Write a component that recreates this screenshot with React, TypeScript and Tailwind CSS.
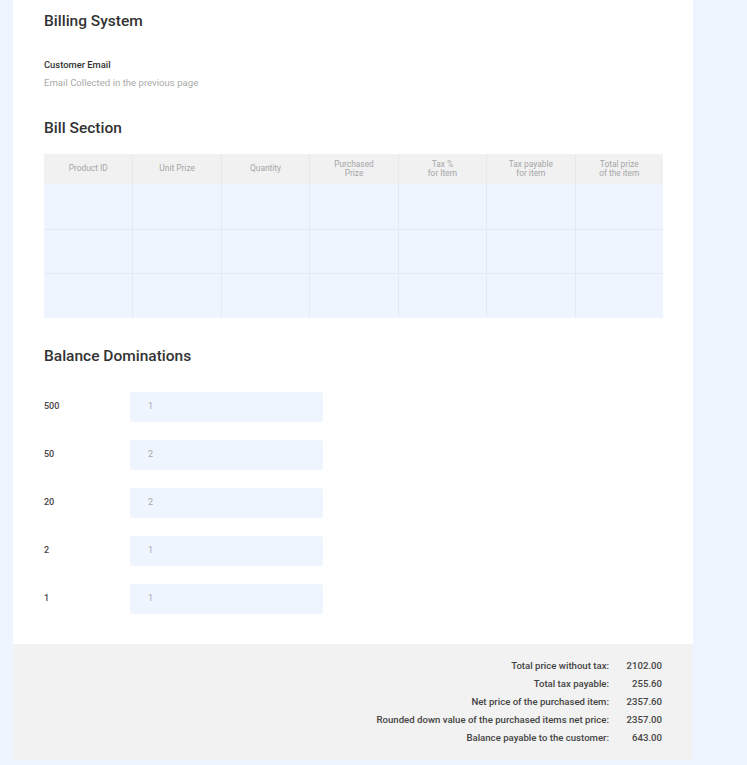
import React from 'react';

const headers = [
  ['Product ID'],
  ['Unit Prize'],
  ['Quantity'],
  ['Purchased', 'Prize'],
  ['Tax %', 'for Item'],
  ['Tax payable', 'for item'],
  ['Total prize', 'of the item'],
];

const rowHeights = ['h-[45px]', 'h-[44px]', 'h-[45px]'];

const denominations = [
  { label: '500', value: '1' },
  { label: '50', value: '2' },
  { label: '20', value: '2' },
  { label: '2', value: '1' },
  { label: '1', value: '1' },
];

const totals = [
  { label: 'Total price without tax:', value: '2102.00' },
  { label: 'Total tax payable:', value: '255.60' },
  { label: 'Net price of the purchased item:', value: '2357.60' },
  { label: 'Rounded down value of the purchased items net price:', value: '2357.00' },
  { label: 'Balance payable to the customer:', value: '643.00' },
];

export default function App() {
  return (
    <div className="min-h-screen bg-[#eef5fe] font-['Roboto',sans-serif]">
      <div className="ml-[13px] w-[680px] bg-white">
        <div className="px-[31px] pt-[11px]">
          <h1 className="text-[15.5px] leading-[20px] font-medium text-[#333]">Billing System</h1>

          <p className="mt-[28px] text-[9.4px] leading-[12px] font-medium text-[#333]">Customer Email</p>
          <p className="mt-[6px] text-[9.6px] leading-[12px] text-[#aaa]">Email Collected in the previous page</p>

          <h2 className="mt-[29px] text-[15.5px] leading-[20px] font-medium text-[#333]">Bill Section</h2>

          <div className="mt-[16px] w-[619px]">
            <div className="grid grid-cols-7 h-[30px] bg-[#f1f1f1]">
              {headers.map((h, i) => (
                <div
                  key={i}
                  className={`flex flex-col items-center justify-center text-[8.4px] leading-[9.5px] text-[#a6a6a6] ${i > 0 ? 'border-l border-[#e8e8e8]' : ''}`}
                >
                  {h.map((line) => (
                    <span key={line}>{line}</span>
                  ))}
                </div>
              ))}
            </div>
            {rowHeights.map((rh, r) => (
              <div key={r} className={`grid grid-cols-7 ${rh} bg-[#eef5fe] ${r > 0 ? 'border-t border-[#e2eaf4]' : ''}`}>
                {headers.map((_, i) => (
                  <div key={i} className={i > 0 ? 'border-l border-[#e2eaf4]' : ''} />
                ))}
              </div>
            ))}
          </div>

          <h2 className="mt-[28px] text-[15.5px] leading-[20px] font-medium text-[#333]">Balance Dominations</h2>

          <div className="mt-[26px] mb-[30px] flex flex-col gap-[18px]">
            {denominations.map((d) => (
              <div key={d.label} className="flex items-center">
                <span className="w-[86px] text-[9px] font-medium text-[#444]">{d.label}</span>
                <div className="flex h-[30px] w-[193px] items-center rounded-[2px] bg-[#eef5fe] pl-[18px] text-[9px] text-[#aaa]">
                  {d.value}
                </div>
              </div>
            ))}
          </div>
        </div>

        <div className="flex flex-col items-end bg-[#f2f2f2] pr-[31px] pt-[13px] pb-[13px]">
          {totals.map((t) => (
            <div key={t.label} className="flex h-[18px] items-center text-[9.6px] font-medium text-[#444]">
              <span className="text-right">{t.label}</span>
              <span className="ml-[17px] w-[36px] text-right">{t.value}</span>
            </div>
          ))}
        </div>
      </div>
    </div>
  );
}
